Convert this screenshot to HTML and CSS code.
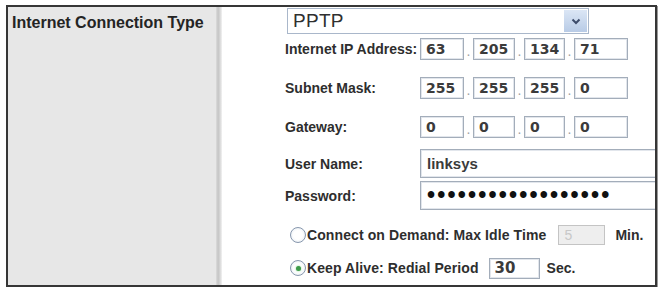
FILE: index.html
```html
<!DOCTYPE html>
<html>
<head>
<meta charset="utf-8">
<link rel="stylesheet" href="styles.css">
</head>
<body>
<div class="frame">
  <div class="side">
    <div class="heading">Internet Connection Type</div>
  </div>
  <div class="sep"></div>
  <div class="main">
    <div class="select">
      <span class="select-text">PPTP</span>
      <span class="select-btn">
        <svg width="10" height="7" viewBox="0 0 10 7"><path d="M1.5 1.5 L5 5 L8.5 1.5" fill="none" stroke="#3d4c6b" stroke-width="2"/></svg>
      </span>
    </div>

    <div class="row r-ip1">
      <span class="label">Internet IP Address:</span>
      <span class="box w1">63</span><span class="dot">.</span><span class="box w2">205</span><span class="dot">.</span><span class="box w3">134</span><span class="dot">.</span><span class="box w4">71</span>
    </div>
    <div class="row r-ip">
      <span class="label">Subnet Mask:</span>
      <span class="box w1">255</span><span class="dot">.</span><span class="box w2">255</span><span class="dot">.</span><span class="box w3">255</span><span class="dot">.</span><span class="box w4">0</span>
    </div>
    <div class="row r-ip">
      <span class="label">Gateway:</span>
      <span class="box w1">0</span><span class="dot">.</span><span class="box w2">0</span><span class="dot">.</span><span class="box w3">0</span><span class="dot">.</span><span class="box w4">0</span>
    </div>
    <div class="row r-user">
      <span class="label">User Name:</span>
      <span class="box wide">linksys</span>
    </div>
    <div class="row r-pass">
      <span class="label">Password:</span>
      <span class="box wide pw">••••••••••••••••••</span>
    </div>
    <div class="row r-radio1">
      <span class="radio"></span>
      <span class="rtext">Connect on Demand: Max Idle Time</span>
      <span class="box idle">5</span>
      <span class="unit min">Min.</span>
    </div>
    <div class="row r-radio2">
      <span class="radio checked"></span>
      <span class="rtext">Keep Alive: Redial Period</span>
      <span class="box redial">30</span>
      <span class="unit sec">Sec.</span>
    </div>
  </div>
</div>
</body>
</html>
```

FILE: styles.css
```css
html, body {
  margin: 0;
  padding: 0;
  background: #ffffff;
}

.frame {
  box-sizing: border-box;
  margin: 5px 0 0 6px;
  width: 651px;
  height: 282px;
  border: 2px solid #363636;
  display: flex;
  overflow: hidden;
  background: #ffffff;
  box-shadow: 1px 1px 0 #9a9a9a;
}

.side {
  width: 208px;
  background: #e7e7e7;
  padding: 6px 0 0 4px;
  box-sizing: border-box;
  flex: none;
}

.heading {
  font-family: "Liberation Sans", Arial, sans-serif;
  font-weight: bold;
  font-size: 16px;
  line-height: 20px;
  color: #242424;
}

.sep {
  width: 6px;
  flex: none;
  background: linear-gradient(to right, #dcdcdc 0, #c4c4c4 35%, #d6d6d6 65%, #f2f2f2 100%);
}

.main {
  flex: 1;
  padding-left: 63px;
  display: flex;
  flex-direction: column;
  font-family: "Liberation Sans", Arial, sans-serif;
  font-weight: bold;
  font-size: 14px;
  color: #2e2e2e;
}

.select {
  margin: 1px 0 0 2px;
  width: 302px;
  height: 26px;
  box-sizing: border-box;
  border: 1px solid #a9b7ca;
  display: flex;
  align-items: center;
  justify-content: space-between;
  background: #fff;
}

.select-text {
  font-weight: normal;
  font-size: 19px;
  color: #2f2f2f;
  padding-left: 5px;
  letter-spacing: 0.3px;
}

.select-btn {
  width: 23px;
  height: 22px;
  margin-right: 1px;
  background: linear-gradient(#dbe6f5, #b8cbe6);
  display: flex;
  align-items: center;
  justify-content: center;
}

.row {
  display: flex;
  align-items: center;
  height: 22px;
}

.r-ip1 { margin-top: 4px; }
.r-ip { margin-top: 17px; }
.r-user { margin-top: 11px; height: 29px; }
.r-pass { margin-top: 3px; height: 29px; }
.r-radio1 { margin-top: 14px; }
.r-radio2 { margin-top: 11px; }

.label {
  width: 135px;
  flex: none;
}

.box {
  box-sizing: border-box;
  height: 22px;
  border: 1px solid #a3adba;
  box-shadow: inset 0 0 0 1px #e2e6ec;
  font-family: "DejaVu Sans", Verdana, sans-serif;
  font-weight: bold;
  font-size: 14px;
  line-height: 20px;
  color: #3b3b3b;
  padding-left: 5px;
  flex: none;
  background: #fff;
}

.w1 { width: 44px; }
.w2 { width: 42px; }
.w3 { width: 41px; }
.w4 { width: 54px; }

.dot {
  width: 9px;
  flex: none;
  text-align: center;
  color: #a0a0a0;
  font-weight: normal;
  font-size: 14px;
  align-self: flex-end;
  line-height: 18px;
}

.wide {
  width: 250px;
  height: 29px;
  line-height: 27px;
  font-family: "Liberation Sans", Arial, sans-serif;
  font-size: 15px;
  padding-left: 6px;
}

.pw {
  font-size: 23px;
  letter-spacing: 2.2px;
  color: #111;
  line-height: 26px;
}

.radio {
  box-sizing: border-box;
  width: 16px;
  height: 16px;
  border-radius: 50%;
  border: 1px solid #8797ad;
  background: radial-gradient(circle, #ffffff 45%, #dfe6ef 100%);
  margin-left: 5px;
  flex: none;
  display: flex;
  align-items: center;
  justify-content: center;
}

.radio.checked::after {
  content: "";
  width: 5px;
  height: 5px;
  border-radius: 50%;
  background: #3e9a4a;
  box-shadow: 0 0 2px #7fd18a;
}

.rtext {
  margin-left: 1px;
  letter-spacing: 0.1px;
}

.idle {
  margin-left: 12px;
  width: 47px;
  height: 20px;
  line-height: 18px;
  background: #eeeeee;
  border-color: #c4c4c4;
  box-shadow: none;
  color: #c8c8c8;
  font-weight: normal;
  font-family: "Liberation Sans", Arial, sans-serif;
}

.redial {
  margin-left: 10px;
  width: 51px;
  height: 21px;
  line-height: 19px;
  font-size: 15px;
}

.min { margin-left: 10px; }
.sec { margin-left: 7px; }
```
